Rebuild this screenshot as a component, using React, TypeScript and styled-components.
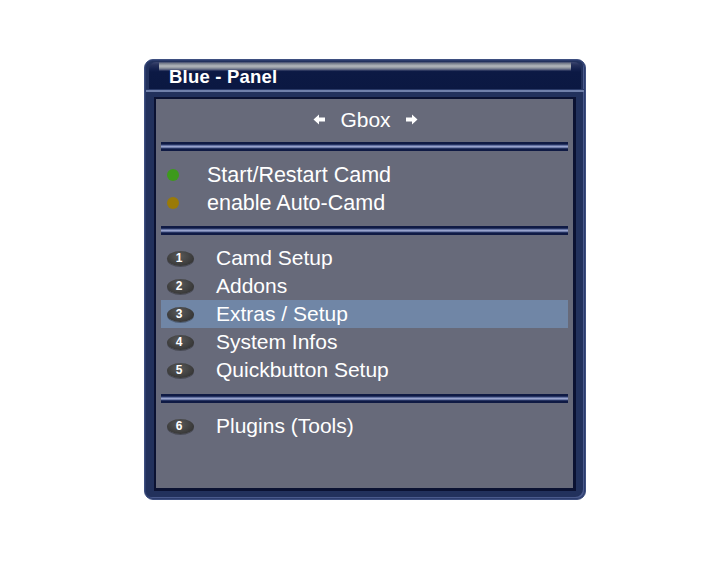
import React from "react";
import styled, { createGlobalStyle } from "styled-components";

const Global = createGlobalStyle`
  html, body { margin: 0; padding: 0; background: #ffffff; }
  body { font-family: "Liberation Sans", Arial, sans-serif; }
`;

const Page = styled.div`
  width: 720px;
  height: 576px;
  padding: 59px 0 0 144px;
  box-sizing: border-box;
`;

const Frame = styled.div`
  width: 442px;
  height: 441px;
  box-sizing: border-box;
  border-radius: 9px;
  background: #22315c;
  border: 1px solid #3e4f80;
  box-shadow: inset 0 0 0 1px #2c3c6c, inset -2px -2px 0 #4a5a8c;
  display: flex;
  flex-direction: column;
  overflow: hidden;
`;

const Header = styled.div`
  height: 27px;
  margin: 2px 4px 0 4px;
  border-radius: 7px 7px 0 0;
  background: linear-gradient(
      to bottom,
      transparent 0px,
      #6e7584 1px,
      #9ca2aa 3px,
      #b4b8bc 4px,
      #9096a0 6px,
      #4a5274 8px,
      transparent 9px
    )
    10px 0 / calc(100% - 20px) 100% no-repeat,
    linear-gradient(to bottom, #3c4670 0px, #25305a 3px, #14214e 7px, #0c1944 10px, #0b1842 100%);
  display: flex;
  align-items: center;
  padding: 3px 0 0 20px;
  box-sizing: border-box;
`;

const Title = styled.span`
  color: #ffffff;
  font-weight: bold;
  font-size: 18.5px;
  letter-spacing: 0.2px;
`;

const HeaderRule = styled.div`
  height: 2px;
  background: #7080aa;
  margin: 0 1px;
  border-top: 1px solid #2a3a68;
`;

const Body = styled.div`
  flex: 1;
  padding: 5px 9px 8px 9px;
  display: flex;
`;

const Content = styled.div`
  flex: 1;
  background: #676a7a;
  border: 2px solid #0b1232;
  border-right-width: 3px;
  border-bottom-width: 3px;
  padding: 0 5px;
  display: flex;
  flex-direction: column;
`;

const NavRow = styled.div`
  height: 43px;
  display: flex;
  align-items: center;
  justify-content: center;
  gap: 15px;
  color: #ffffff;
  font-size: 21px;
  padding: 0 0 2px 2px;
  box-sizing: border-box;
`;

const Separator = styled.div`
  height: 9px;
  flex: none;
  background: linear-gradient(
    to bottom,
    #0f1a44 0px,
    #0f1a44 2px,
    #3b4b7e 3px,
    #8c98c4 4px,
    #a4aed4 5px,
    #3b4b7e 6px,
    #0f1a44 7px,
    #0f1a44 9px
  );
`;

const Section = styled.div<{ $top: number; $bottom: number }>`
  padding: ${(p) => p.$top}px 0 ${(p) => p.$bottom}px 0;
  display: flex;
  flex-direction: column;
`;

const ColorRow = styled.div`
  height: 28px;
  display: flex;
  align-items: center;
  padding-left: 6px;
  gap: 28px;
  color: #ffffff;
  font-size: 21.5px;
`;

const Dot = styled.span<{ $color: string }>`
  width: 12px;
  height: 12px;
  border-radius: 50%;
  background: ${(p) => p.$color};
  flex: none;
`;

const MenuRow = styled.div<{ $active?: boolean }>`
  height: 28px;
  display: flex;
  align-items: center;
  padding-left: 6px;
  gap: 22px;
  color: #ffffff;
  font-size: 21px;
  background: ${(p) => (p.$active ? "#7086a6" : "transparent")};
`;

const Badge = styled.span`
  width: 27px;
  height: 15px;
  border-radius: 50%;
  flex: none;
  background: radial-gradient(ellipse at 45% 35%, #5a5a5a 0%, #404040 55%, #2a2a2a 100%);
  box-shadow: 0 1px 0 rgba(0, 0, 0, 0.3);
  color: #ffffff;
  font-size: 12px;
  font-weight: bold;
  line-height: 15px;
  display: flex;
  align-items: center;
  justify-content: center;
  padding-right: 3px;
  box-sizing: border-box;
`;

const Arrow = ({ dir }: { dir: "left" | "right" }) => (
  <svg width="12" height="11" viewBox="0 0 12 11" style={{ transform: dir === "left" ? "scaleX(-1)" : undefined }}>
    <path d="M0 3.5 H6 V0.5 L11.5 5.5 L6 10.5 V7.5 H0 Z" fill="#ffffff" />
  </svg>
);

const colorItems = [
  { color: "#3d9a1c", label: "Start/Restart Camd" },
  { color: "#9a7a08", label: "enable Auto-Camd" },
];

const menuItems = [
  { n: 1, label: "Camd Setup" },
  { n: 2, label: "Addons" },
  { n: 3, label: "Extras / Setup", active: true },
  { n: 4, label: "System Infos" },
  { n: 5, label: "Quickbutton Setup" },
];

export default function App() {
  return (
    <>
      <Global />
      <Page>
        <Frame>
          <Header>
            <Title>Blue - Panel</Title>
          </Header>
          <HeaderRule />
          <Body>
            <Content>
              <NavRow>
                <Arrow dir="left" />
                <span>Gbox</span>
                <Arrow dir="right" />
              </NavRow>
              <Separator />
              <Section $top={10} $bottom={9}>
                {colorItems.map((c) => (
                  <ColorRow key={c.label}>
                    <Dot $color={c.color} />
                    <span>{c.label}</span>
                  </ColorRow>
                ))}
              </Section>
              <Separator />
              <Section $top={9} $bottom={10}>
                {menuItems.map((m) => (
                  <MenuRow key={m.n} $active={m.active}>
                    <Badge>{m.n}</Badge>
                    <span>{m.label}</span>
                  </MenuRow>
                ))}
              </Section>
              <Separator />
              <Section $top={9} $bottom={0}>
                <MenuRow>
                  <Badge>6</Badge>
                  <span>Plugins (Tools)</span>
                </MenuRow>
              </Section>
            </Content>
          </Body>
        </Frame>
      </Page>
    </>
  );
}
